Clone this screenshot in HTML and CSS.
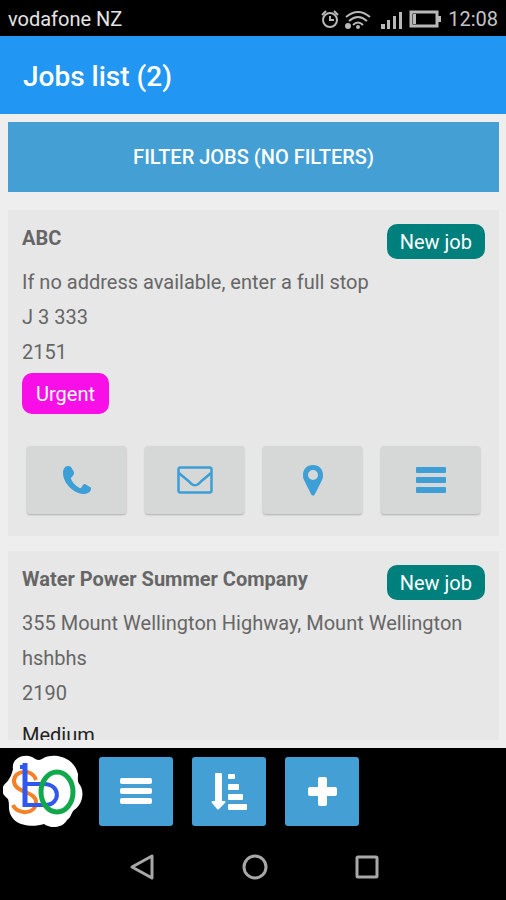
FILE: index.html
```html
<!DOCTYPE html>
<html lang="en">
<head>
<meta charset="utf-8">
<meta name="viewport" content="width=device-width, initial-scale=1">
<title>Jobs list</title>
<link rel="stylesheet" href="styles.css">
</head>
<body>
<div class="status">
  <span class="carrier">vodafone NZ</span>
  <svg class="status-icons" width="122" height="24" viewBox="0 0 122 24" fill="none" stroke="#b8b8b8" stroke-width="2" aria-hidden="true">
    <circle cx="10" cy="13" r="7"/><path d="M10 9v4h4M2 8l4-4M18 8l-4-4" stroke-width="2"/>
    <path d="M26 10q12-10 24 0M29 14q9-8 18 0M33 18q5-5 10 0" stroke-width="2"/>
    <circle cx="38" cy="20" r="2" fill="#b8b8b8" stroke="none"/><circle cx="28" cy="19" r="3" fill="#b8b8b8" stroke="none"/>
    <path d="M61 17h4v5h-4zM67 13h3v9h-3zM73 9h3v13h-3zM79 5h3v17h-3z" fill="#b8b8b8" stroke="none"/>
    <path d="M91 5h26v14H91z" stroke-width="3"/><path d="M93 7h3v10h-3zM118 9h3v6h-3z" fill="#b8b8b8" stroke="none"/>
  </svg>
  <span class="clock">12:08</span>
</div>
<header class="topbar"><h1>Jobs list (2)</h1></header>
<main class="content">
  <button class="filter" type="button">FILTER JOBS (NO FILTERS)</button>
  <div class="jobs">
    <article class="job">
      <div class="job-head"><h2>ABC</h2><span class="state">New job</span></div>
      <p>If no address available, enter a full stop</p>
      <p>J 3 333</p>
      <p>2151</p>
      <span class="priority urgent">Urgent</span>
      <div class="actions">
        <button type="button" aria-label="Call"><svg width="28" height="28" viewBox="0 0 28 28" fill="#3d9fd6"><path d="M5 0C2 0 0 3 0 7c0 10 10 20 20 21 4 0 8-2 8-5 0-1 0-2-1-2l-5-3c-1 0-1 0-2 1l-2 3c-1 0-2 0-3-1-3-2-5-4-7-8 0-1 0-2 1-2l2-3c0-1 0-1 0-2L8 1C7 0 6 0 5 0z"/></svg></button>
        <button type="button" aria-label="Email"><svg width="36" height="28" viewBox="0 0 36 28" fill="none" stroke="#3d9fd6" stroke-width="2.500"><rect x="1.500" y="1.500" width="33" height="25" rx="2"/><path d="M2 7C6 11 11 14 14 17.500c3 2.500 5 2.500 8 0C25 14 30 11 34 7"/></svg></button>
        <button type="button" aria-label="Map"><svg width="20" height="31" viewBox="0 0 20 31" fill="#3d9fd6"><path fill-rule="evenodd" d="M10 0C4 0 0 4 0 10c0 2 0 3 1 5l7 14c1 2 3 2 4 0l7-14c1-2 1-3 1-5C20 4 16 0 10 0zm0 5a5 5 0 1 1 0 10 5 5 0 0 1 0-10z"/></svg></button>
        <button type="button" aria-label="More"><svg width="30" height="26" viewBox="0 0 30 26" fill="#3d9fd6"><rect width="30" height="6" rx="1"/><rect y="10" width="30" height="6" rx="1"/><rect y="20" width="30" height="6" rx="1"/></svg></button>
      </div>
    </article>
    <article class="job">
      <div class="job-head"><h2>Water Power Summer Company</h2><span class="state">New job</span></div>
      <p>355 Mount Wellington Highway, Mount Wellington</p>
      <p>hshbhs</p>
      <p>2190</p>
      <span class="priority">Medium</span>
    </article>
  </div>
</main>
<footer class="toolbar">
  <svg class="logo" width="80" height="72" viewBox="0 0 80 72" fill="none" role="img" aria-label="SbO">
    <path fill="#fff" d="M10 14C8 4 20-2 29 2c5 3 6 4 10 2C49-3 71 1 75 19c0 5-1 7 2 11 5 8 2 20-6 25-3 3-3 8-7 10-4 8-16 9-23 4-13 4-33 2-35-15 0-5 0-6-1-10C-4 37-1 31 4 27c3-4 5-8 6-13z"/>
    <path stroke="#f58025" stroke-width="4" d="M33 25C29 13 11 15 11 26c0 12 22 10 22 21 0 13-19 13-23 3"/>
    <path stroke="#3158ee" stroke-width="5" d="M22 8v44"/>
    <path stroke="#3158ee" stroke-width="4" d="M17 12h5M22 29h19c17 0 17 21 1 21H22"/>
    <ellipse cx="54" cy="37" rx="16" ry="20" stroke="#10a84a" stroke-width="5"/>
  </svg>
  <button type="button" aria-label="Menu"><svg width="32" height="26" viewBox="0 0 32 26" fill="#fff"><rect width="32" height="6" rx="2"/><rect y="10" width="32" height="6" rx="2"/><rect y="20" width="32" height="6" rx="2"/></svg></button>
  <button type="button" aria-label="Sort"><svg width="36" height="37" viewBox="0 0 36 37" fill="#fff"><path d="M5 0h5q1 0 1 1v27h3q1 1 0 2l-6 6q-1 1-2 0l-5-6q-1-1 0-2h3V1q0-1 1-1z"/><rect x="17" y="1" width="7" height="5" rx="1"/><rect x="17" y="11" width="11" height="6" rx="1"/><rect x="17" y="21" width="15" height="6" rx="1"/><rect x="17" y="31" width="19" height="6" rx="1"/></svg></button>
  <button type="button" aria-label="Add"><svg width="29" height="29" viewBox="0 0 29 29" fill="#fff"><path d="M12 0h5q2 0 2 2v8h8q2 0 2 2v5q0 2-2 2h-8v8q0 2-2 2h-5q-2 0-2-2v-8H2q-2 0-2-2v-5q0-2 2-2h8V2q0-2 2-2z"/></svg></button>
</footer>
<nav class="navbar" aria-label="System">
  <button type="button" aria-label="Back"><svg width="26" height="28" viewBox="0 0 26 28"><path d="M23 3v22L3 14z"/></svg></button>
  <button type="button" aria-label="Home"><svg width="26" height="28" viewBox="0 0 26 28"><circle cx="13" cy="14" r="11"/></svg></button>
  <button type="button" aria-label="Recent"><svg width="26" height="28" viewBox="0 0 26 28"><rect x="3" y="4" width="20" height="20" rx="1"/></svg></button>
</nav>
</body>
</html>
```

FILE: styles.css
```css
* { box-sizing: border-box; }

body {
  margin: 0;
  height: 100vh;
  display: flex;
  flex-direction: column;
  background: #000;
  color: #666;
  font: 20px/35px Roboto, sans-serif;
}

h1, h2, p { margin: 0; }

button {
  border: 0;
  padding: 0;
  font: inherit;
  display: flex;
  align-items: center;
  justify-content: center;
}

.status {
  flex: none;
  height: 36px;
  padding: 2px 8px 0;
  display: flex;
  align-items: center;
  color: #c4c4c4;
}

.carrier { flex: 1; color: #e4e4e4; }
.status-icons { margin-right: 6px; }

.topbar {
  flex: none;
  padding: 23px 23px 20px;
  background: #2196f3;
}

.topbar h1 {
  color: #fff;
  font-size: 28px;
  font-weight: 500;
  line-height: 35px;
}

.content {
  flex: 1;
  min-height: 0;
  padding: 8px 7px 8px 8px;
  display: flex;
  flex-direction: column;
  background: #eee;
}

.filter {
  flex: none;
  height: 70px;
  margin-bottom: 18px;
  background: #439fd4;
  color: #fff;
  font-weight: 500;
}

.jobs {
  flex: 1;
  min-height: 0;
  overflow: hidden;
  display: flex;
  flex-direction: column;
  gap: 15px;
}

.job {
  flex: none;
  padding: 14px 14px 22px;
  background: #e7e7e7;
}

.job-head {
  display: flex;
  justify-content: space-between;
  align-items: flex-start;
  height: 41px;
}

.job h2 {
  font-size: 20px;
  font-weight: 700;
  line-height: 28px;
}

.state {
  padding: 1px 13px 0;
  border-radius: 10px;
  background: #00807c;
  color: #fff;
  line-height: 34px;
}

.priority {
  display: block;
  width: fit-content;
  margin-top: 3px;
  padding-top: 2px;
  line-height: 39px;
  color: #222;
}

.urgent {
  padding: 2px 14px 0;
  border-radius: 10px;
  background: #f80fe8;
  color: #fff;
}

.actions {
  display: grid;
  grid-template-columns: repeat(4, 1fr);
  gap: 19px;
  padding: 0 5px;
  margin-top: 32px;
}

.actions button {
  height: 68px;
  border-radius: 3px;
  background: #d6d8d7;
  box-shadow: 0 1px 2px rgba(0, 0, 0, 0.25);
}

.toolbar {
  flex: none;
  height: 86px;
  padding: 0 3px;
  display: flex;
  align-items: center;
}

.logo { margin-right: 16px; }

.toolbar button {
  width: 74px;
  height: 69px;
  margin-right: 19px;
  border-radius: 3px;
  background: #439fd4;
}

.navbar {
  flex: none;
  height: 66px;
  padding: 0 126px 0 129px;
  display: flex;
  align-items: center;
  justify-content: space-between;
}

.navbar button { background: none; }

.navbar svg {
  fill: none;
  stroke: #a8a8a8;
  stroke-width: 3px;
  stroke-linejoin: round;
}
```
